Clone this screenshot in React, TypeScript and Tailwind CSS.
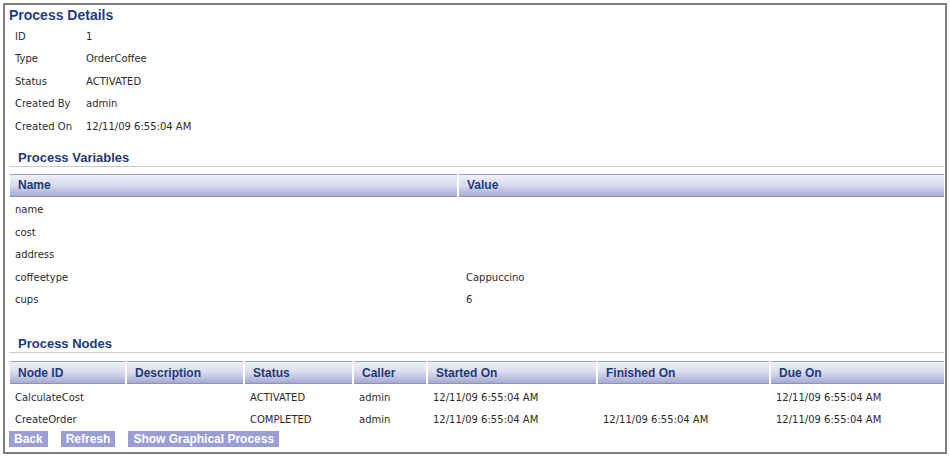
import React from 'react'

const details = [
  ['ID', '1'],
  ['Type', 'OrderCoffee'],
  ['Status', 'ACTIVATED'],
  ['Created By', 'admin'],
  ['Created On', '12/11/09 6:55:04 AM'],
]

const variables = [
  ['name', ''],
  ['cost', ''],
  ['address', ''],
  ['coffeetype', 'Cappuccino'],
  ['cups', '6'],
]

const nodeCols = [
  { label: 'Node ID', w: 'w-[115px]' },
  { label: 'Description', w: 'w-[116px]' },
  { label: 'Status', w: 'w-[107px]' },
  { label: 'Caller', w: 'w-[72px]' },
  { label: 'Started On', w: 'w-[168px]' },
  { label: 'Finished On', w: 'w-[171px]' },
  { label: 'Due On', w: 'flex-1' },
]

const nodes = [
  ['CalculateCost', '', 'ACTIVATED', 'admin', '12/11/09 6:55:04 AM', '', '12/11/09 6:55:04 AM'],
  ['CreateOrder', '', 'COMPLETED', 'admin', '12/11/09 6:55:04 AM', '12/11/09 6:55:04 AM', '12/11/09 6:55:04 AM'],
]

const headCell =
  'h-[23px] flex items-center pl-[8px] border-t border-b border-t-[#9c9eb0] border-b-[#8d91bb] bg-gradient-to-b from-[#eff0f9] via-[#d8dbee] to-[#a6aad1] font-["Liberation_Sans",Arial,sans-serif] text-[12px] font-bold text-[#1e3a78]'

const SectionTitle = ({ children }: { children: React.ReactNode }) => (
  <div className="ml-[4px] pl-[9px] h-[17px] leading-[16px] border-b border-[#c9c9c9] font-['Liberation_Sans',Arial,sans-serif] text-[13px] font-bold text-[#1e3a78]">
    {children}
  </div>
)

export default function App() {
  return (
    <div className="w-[950px] h-[457px] bg-white p-[3px] font-['DejaVu_Sans',Verdana,sans-serif] text-[10px] text-[#2b2b2b]">
      <div className="h-[451px] border-2 border-[#7f7f7f] pr-[1px]">
        <h1 className="mt-[1px] h-[18px] leading-[18px] pl-[4px] font-['Liberation_Sans',Arial,sans-serif] text-[14px] font-bold text-[#1f3b80]">
          Process Details
        </h1>
        <div className="flex flex-col">
          {details.map(([label, value]) => (
            <div key={label} className="flex h-[22.5px] items-center pl-[10px] pt-[2px]">
              <span className="w-[71px]">{label}</span>
              <span>{value}</span>
            </div>
          ))}
        </div>

        <div className="mt-[13px]">
          <SectionTitle>Process Variables</SectionTitle>
        </div>
        <div className="mt-[7px] ml-[5px] flex flex-col gap-[2px]">
          <div className="flex gap-[2px]">
            <div className={`w-[447px] ${headCell}`}>Name</div>
            <div className={`flex-1 ${headCell}`}>Value</div>
          </div>
          {variables.map(([name, value]) => (
            <div key={name} className="flex gap-[2px] h-[20.5px] items-center pt-[2px]">
              <div className="w-[447px] pl-[5px]">{name}</div>
              <div className="flex-1 pl-[7px]">{value}</div>
            </div>
          ))}
        </div>

        <div className="mt-[27px]">
          <SectionTitle>Process Nodes</SectionTitle>
        </div>
        <div className="mt-[8px] ml-[5px] flex flex-col gap-[2px]">
          <div className="flex gap-[2px]">
            {nodeCols.map((c) => (
              <div key={c.label} className={`${c.w} ${headCell}`}>
                {c.label}
              </div>
            ))}
          </div>
          {nodes.map((row) => (
            <div key={row[0]} className="flex gap-[2px] h-[20.5px] items-center pt-[2px]">
              {row.map((cell, i) => (
                <div key={i} className={`${nodeCols[i].w} pl-[5px]`}>
                  {cell}
                </div>
              ))}
            </div>
          ))}
        </div>

        <div className="mt-[2px] ml-[4px] flex gap-[13px]">
          {['Back', 'Refresh', 'Show Graphical Process'].map((b) => (
            <button
              key={b}
              className="h-[16px] px-[5px] bg-[#9a9ed4] text-white font-['Liberation_Sans',Arial,sans-serif] text-[12px] font-bold leading-[16px]"
            >
              {b}
            </button>
          ))}
        </div>
      </div>
    </div>
  )
}
